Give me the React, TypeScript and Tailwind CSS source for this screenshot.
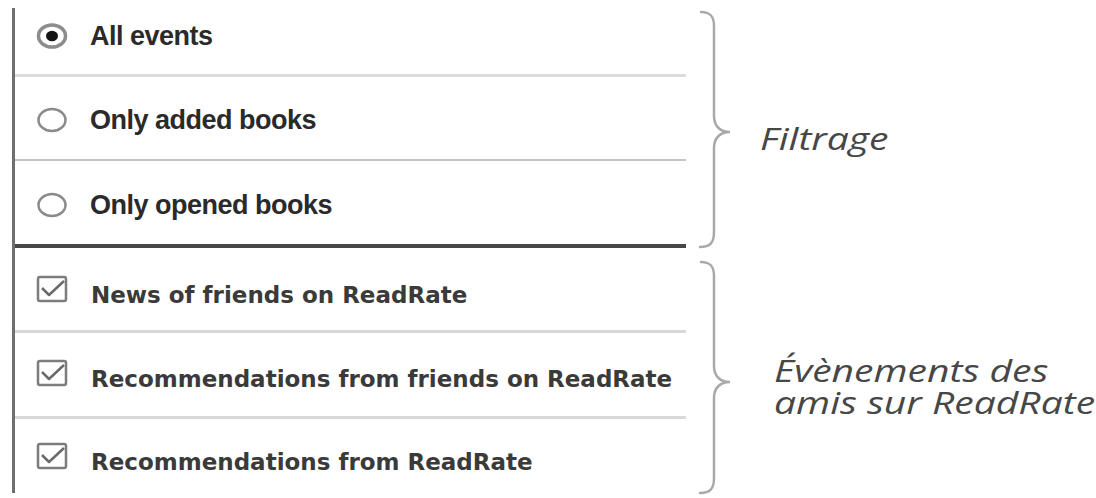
import React from "react";

type Row = {
  kind: "radio" | "check";
  label: string;
  selected?: boolean;
  box: string;
};

const rows: Row[] = [
  { kind: "radio", label: "All events", selected: true, box: "h-[69px] pb-[10px] border-b-[3px] border-[#dcdcdc]" },
  { kind: "radio", label: "Only added books", box: "h-[84px] pt-[4px] border-b-[2px] border-[#c4c4c4]" },
  { kind: "radio", label: "Only opened books", box: "h-[87px] pt-[5px] border-b-[4px] border-[#474747]" },
  { kind: "check", label: "News of friends on ReadRate", selected: true, box: "h-[85px] pt-[12px] border-b-[3px] border-[#d8d8d8]" },
  { kind: "check", label: "Recommendations from friends on ReadRate", selected: true, box: "h-[86px] pt-[9px] border-b-[3px] border-[#d8d8d8]" },
  { kind: "check", label: "Recommendations from ReadRate", selected: true, box: "h-[74px] pt-[12px]" },
];

function Radio({ on }: { on?: boolean }) {
  return (
    <svg width="32" height="26" viewBox="0 0 32 26" className="shrink-0">
      <ellipse cx="16" cy="13" rx="13.5" ry="11" fill="none" stroke={on ? "#8c8c8c" : "#8a8a8a"} strokeWidth={on ? 3.5 : 2.5} />
      {on && <ellipse cx="16" cy="13" rx="6" ry="5.2" fill="#141414" />}
    </svg>
  );
}

function Check() {
  return (
    <svg width="32" height="28" viewBox="0 0 32 28" className="shrink-0 mb-[12px]">
      <rect x="2" y="2" width="28" height="24" rx="2" fill="none" stroke="#7c7c7c" strokeWidth="2.5" />
      <path d="M6 13 L13 20 L28 6" fill="none" stroke="#6a6a6a" strokeWidth="2.5" strokeLinejoin="round" />
    </svg>
  );
}

function Brace({ h, mid }: { h: number; mid: number }) {
  const d = `M3 6 C 12 6, 16 10, 16 20 L16 ${mid - 16} C16 ${mid - 6}, 22 ${mid}, 32 ${mid} C 22 ${mid}, 16 ${mid + 6}, 16 ${mid + 16} L16 ${h - 20} C16 ${h - 9}, 12 ${h - 5}, 2 ${h - 5}`;
  return (
    <svg width="36" height={h} viewBox={`0 0 36 ${h}`} className="shrink-0">
      <path d={d} fill="none" stroke="#a9a9a9" strokeWidth="2.5" strokeLinecap="round" />
    </svg>
  );
}

export default function App() {
  return (
    <div className="w-[1096px] h-[498px] bg-white flex overflow-hidden">
      {/* settings list */}
      <div className="pl-[12px] pt-[8px]">
        <div className="w-[674px] h-[485px] border-l-[3px] border-[#6e6e6e] flex flex-col">
          {rows.map((r) => (
            <div key={r.label} className={`flex items-center shrink-0 pl-[21px] ${r.box}`}>
              {r.kind === "radio" ? <Radio on={r.selected} /> : <Check />}
              {r.kind === "radio" ? (
                <span className="ml-[22px] text-[27px] leading-none font-bold text-[#2a2a2a] font-['Liberation_Sans',Arial,sans-serif] tracking-[-0.5px]">
                  {r.label}
                </span>
              ) : (
                <span className="ml-[23px] text-[23px] leading-none font-bold text-[#3a3a3a] font-['DejaVu_Sans',Verdana,sans-serif]">
                  {r.label}
                </span>
              )}
            </div>
          ))}
        </div>
      </div>

      {/* group annotations */}
      <div className="flex flex-col pt-[6px] ml-[12px]">
        <div className="flex items-start h-[250px]">
          <Brace h={246} mid={126} />
          <div className="ml-[26px] mt-[116px] text-[31px] leading-[32px] italic text-[#474747] font-['Open_Sans',sans-serif]">
            <span className="inline-block origin-left scale-x-[1.26]">Filtrage</span>
          </div>
        </div>
        <div className="flex items-start h-[242px]">
          <Brace h={242} mid={126} />
          <div className="ml-[40px] mt-[98px] text-[31px] leading-[32px] italic text-[#474747] font-['Open_Sans',sans-serif] flex flex-col">
            <span className="inline-block origin-left scale-x-[1.26]">Évènements des</span>
            <span className="inline-block origin-left scale-x-[1.26]">amis sur ReadRate</span>
          </div>
        </div>
      </div>
    </div>
  );
}
